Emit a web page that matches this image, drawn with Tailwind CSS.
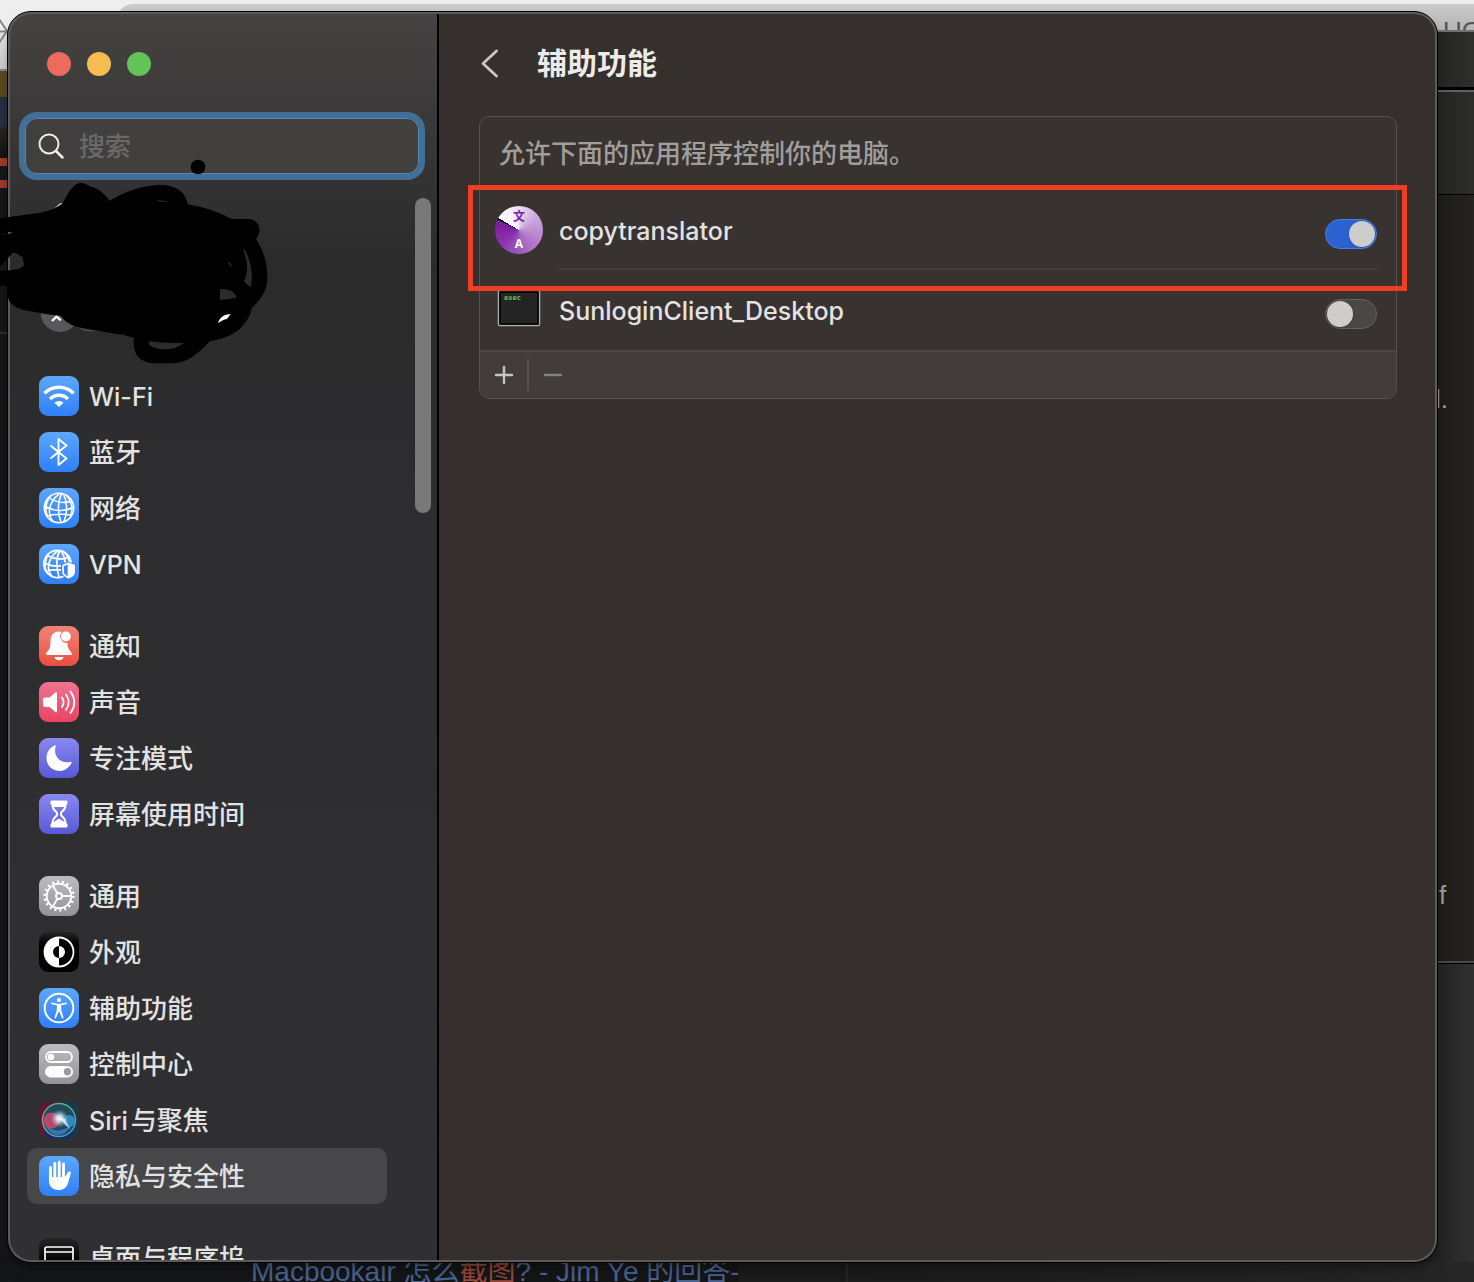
<!DOCTYPE html>
<html lang="zh-CN">
<head>
    <meta charset="UTF-8">
    <meta name="viewport" content="width=device-width, initial-scale=1.0">
    <title>辅助功能</title>
    <script src="https://cdn.jsdelivr.net/npm/@tailwindcss/browser@4"></script>
</head>
<body class="relative h-screen overflow-hidden bg-[#151618] pt-[11px] pr-[36px] pb-[19px] pl-[7px] font-['Inter','Noto_Sans_CJK_SC',sans-serif] text-[#e3e2e2]">

    <!-- Windows behind -->
    <div class="absolute inset-0 flex flex-col overflow-hidden" aria-hidden="true">
        <div class="h-[30px] shrink-0 bg-[#eeeeee] pl-[117px]">
            <div class="mt-1 h-[26px] rounded-tl-2xl bg-linear-to-b from-[#cbcbcb] to-[#b4b4b4] pr-1 pt-[15px] text-right font-['Liberation_Sans',sans-serif] text-[26px] leading-[24px] text-[#555555]"><span class="-mr-3">UG</span></div>
        </div>
        <div class="flex flex-1 justify-between">
            <div class="flex w-[20px] flex-col">
                <div class="h-[39px] bg-linear-to-b from-[#e8e8e8] to-[#cccccc]"></div>
                <div class="h-[28px] border-t-2 border-[#888888] bg-[#5b4a22]"></div>
                <div class="h-[30px] bg-[#263044]"></div>
                <div class="h-[31px] bg-linear-to-b from-[#2b2620] to-[#131313]"></div>
                <div class="h-[30px] border-y-8 border-[#a23a2d] bg-[#16181b]"></div>
                <div class="h-[146px] border-b-2 border-[#2c2d30]"></div>
            </div>
            <div class="flex w-[57px] flex-col">
                <div class="h-[57px] border-t-2 border-[#70706e] bg-linear-to-r from-[#20201f] to-[#2e2e2c]"></div>
                <div class="h-[3px] bg-black"></div>
                <div class="h-[105px] border-t-2 border-b border-t-[#62605f] border-b-black bg-linear-to-r from-[#20201f] to-[#2c2c2a]"></div>
                <div class="flex h-[768px] flex-col justify-between border-b-2 border-[#4a4846] bg-linear-to-r from-[#191816] to-[#252420] pt-[188px] pb-[50px] pl-[18px] font-['Liberation_Sans',sans-serif] text-[26px] leading-[32px] text-[#a09f9d]">
                    <span>l.</span>
                    <span class="pl-1">f</span>
                </div>
                <div class="flex-1 border-t border-black bg-linear-to-r from-[#1c1c1c] to-[#303030]"></div>
            </div>
        </div>
        <div class="flex h-[20px] shrink-0">
            <div class="flex h-[20px] w-[738px] items-end overflow-hidden pl-[251px] font-['Liberation_Sans','Noto_Sans_CJK_SC',sans-serif] text-[28px] leading-[20px] whitespace-nowrap text-[#4c6594]">
                <span>Macbookair 怎么<span class="text-[#9c4a3b]">截图</span>? - Jim Ye 的回答-</span>
            </div>
            <div class="w-[110px] border-r-2 border-[#262626] bg-[#1b1b1b]"></div>
            <div class="flex-1 bg-linear-to-r from-[#1b1b1b] to-[#262626]"></div>
        </div>
    </div>
    <svg class="absolute top-[18px] left-0 h-[28px] w-[8px]" viewBox="0 0 8 28" fill="none" stroke="#858585" stroke-width="2" aria-hidden="true"><path d="M0 13.500h8M-1 1l8 12-8 12"/></svg>

    <!-- Settings window -->
    <div class="relative flex h-full rounded-[24px] border border-black bg-[#5d5a58] p-[2px] shadow-lg shadow-black/30">
        <div class="flex min-w-0 flex-1 overflow-hidden rounded-[21px]">

            <aside class="relative flex w-[429px] shrink-0 flex-col border-r-2 border-black bg-linear-to-b from-[#454342] via-[#2c2b2c] via-20% to-[#303034]">
                <div class="flex shrink-0 gap-4 pt-[38px] pl-[37px]">
                    <button class="size-6 rounded-full bg-[#ed6a5e]" aria-label="关闭"></button>
                    <button class="size-6 rounded-full bg-[#f5bd4f]" aria-label="最小化"></button>
                    <button class="size-6 rounded-full bg-[#61c454]" aria-label="缩放"></button>
                </div>

                <label class="mt-[36px] mr-[12px] ml-[9px] flex h-[68px] shrink-0 items-center gap-[14px] rounded-[18px] border-[6px] border-[#416f98] bg-[#42403f] pl-[12px] inset-ring inset-ring-[#5386b5]">
                    <svg class="size-[28px]" viewBox="0 0 28 28" fill="none" stroke="#eeeeee" stroke-width="2" stroke-linecap="round" aria-hidden="true"><circle cx="12" cy="12" r="9.500"/><path d="M19 19l6.500 6.500" stroke-width="2.500"/></svg>
                    <input type="text" placeholder="搜索" aria-label="搜索" class="min-w-0 flex-1 bg-transparent pt-[2px] text-[26px] leading-[36px] font-medium outline-none placeholder:text-[#6b6968]">
                </label>

                <nav class="flex flex-col gap-[26px] pt-[188px] pr-[50px] pl-[17px] text-[26px] leading-[36px] font-medium">
                    <div class="flex flex-col">
                        <a href="#wifi" class="flex h-14 items-center gap-[10px] rounded-[10px] px-3">
                            <svg class="size-10 rounded-[9px] bg-linear-to-b from-[#5da7fb] to-[#2f7ff8]" viewBox="0 0 40 40" fill="none" stroke="#fff" stroke-width="3.600"><path d="M5.500 17.200c8-8 21-8 29 0M11 23c5-5 13-5 18 0"/><path d="M15.500 26.800q4.500-3.400 9 0L20 31z" fill="#fff" stroke="none"/></svg>
                            <span class="pt-[2px] text-[25px]">Wi-Fi</span>
                        </a>
                        <a href="#bluetooth" class="flex h-14 items-center gap-[10px] rounded-[10px] px-3">
                            <svg class="size-10 rounded-[9px] bg-linear-to-b from-[#5da7fb] to-[#2f7ff8]" viewBox="0 0 40 40" fill="none" stroke="#fff" stroke-width="1.900" stroke-linejoin="round" stroke-linecap="round"><path d="M12 14l15.500 12.500L19.500 33V7l8 6.500L12 26"/></svg>
                            <span class="pt-[2px]">蓝牙</span>
                        </a>
                        <a href="#network" class="flex h-14 items-center gap-[10px] rounded-[10px] px-3">
                            <svg class="size-10 rounded-[9px] bg-linear-to-b from-[#5da7fb] to-[#2f7ff8]" viewBox="0 0 40 40" fill="none" stroke="#fff" stroke-width="1.600"><circle cx="20" cy="20" r="14.700"/><path d="M21 5.300C14 10 11 16 10.500 22S12 31 14 33M23 5.500C19 12 18 24 22 34.500M24.500 6C28 13 29 24 25 33.500M10 9.500c6 5 15 6 23 3.500M5.500 18c8 5.500 20 6 29 1M8 28c7-2 18-2.500 25-.5M10 9.500c-4 7-4 13-1.500 19M27 7c5 5 7 12 5 20"/></svg>
                            <span class="pt-[2px]">网络</span>
                        </a>
                        <a href="#vpn" class="flex h-14 items-center gap-[10px] rounded-[10px] px-3">
                            <svg class="size-10 rounded-[9px] bg-linear-to-b from-[#5da7fb] to-[#2f7ff8]" viewBox="0 0 40 40" fill="none" stroke="#fff" stroke-width="1.700"><circle cx="18.500" cy="20" r="13.700"/><path d="M19 6.500C13 11 10 17 9.500 22S11 30 13 32.500M21 6.500C17 13 17 24 20 33M22 7c4 6 5 11 4.500 17M25 8c4 4 5 7 5.500 11M8 11c6 4 14 5 22 2.500M5 18.500c7 4.500 18 5 27 1M7 27.500c5-2 12-2 17-1.500M9 10c-3 6-4 12-1.500 18"/><path d="M29.500 17.500l7.500 3v7c0 4-3.500 6.500-7.500 8-4-1.500-7.500-4-7.500-8v-7z" fill="#3a87f9" stroke="none"/><path d="M29.500 19.500l5.500 2v6c0 3-2.500 5-5.500 6-3-1-5.500-3-5.500-6v-6z"/><path d="M29.500 19.500l5.500 2v6c0 3-2.500 5-5.500 6z" fill="#fff"/></svg>
                            <span class="pt-[2px] text-[25px]">VPN</span>
                        </a>
                    </div>
                    <div class="flex flex-col">
                        <a href="#notifications" class="flex h-14 items-center gap-[10px] rounded-[10px] px-3">
                            <svg class="size-10 rounded-[9px] bg-linear-to-b from-[#ee8378] to-[#eb4d3d]" viewBox="0 0 40 40" fill="#fff"><path d="M20 5.500c-6 0-8.500 4.500-8.500 9.500 0 7-1.200 8.500-3.500 11-1.500 1.700-1 3 .5 3h23c1.500 0 2-1.300.5-3-2-2.500-3.500-4-3.500-9a6.800 6.800 0 0 1-6-10.900zM15.500 31h9c-1 4.300-8 4.300-9 0z"/><circle cx="26.800" cy="10.500" r="5"/></svg>
                            <span class="pt-[2px]">通知</span>
                        </a>
                        <a href="#sound" class="flex h-14 items-center gap-[10px] rounded-[10px] px-3">
                            <svg class="size-10 rounded-[9px] bg-linear-to-b from-[#ee7390] to-[#ea4262]" viewBox="0 0 40 40" fill="none" stroke="#fff" stroke-width="1.700" stroke-linecap="round"><path d="M18 11v18.500c0 1-1 1.200-1.700.6L10.500 25H6c-1.200 0-2-.8-2-2v-5.500c0-1.200.8-2 2-2h4.500l5.800-5c.7-.6 1.700-.4 1.700.5z" fill="#fff" stroke="none"/><path d="M23 15.500c2 3 2 6.500 0 9.500M27 12.500c3.500 5 3.500 10.500 0 15.500M31.500 9.500c5 7 5 14.500 0 21.500"/></svg>
                            <span class="pt-[2px]">声音</span>
                        </a>
                        <a href="#focus" class="flex h-14 items-center gap-[10px] rounded-[10px] px-3">
                            <svg class="size-10 rounded-[9px] bg-linear-to-b from-[#8a88f0] to-[#5a58d8]" viewBox="0 0 40 40" fill="#fff"><path d="M15.600 7.500c.8-.4 1.400.1 1.100 1-3 9.500 4.800 18 14.600 15.300 1-.3 1.600.3 1.200 1.200C29.500 30.500 25 33 20.500 33 13.500 33 7.500 27.500 7.500 20c0-5.500 3-10.500 8.100-12.500z"/></svg>
                            <span class="pt-[2px]">专注模式</span>
                        </a>
                        <a href="#screentime" class="flex h-14 items-center gap-[10px] rounded-[10px] px-3">
                            <svg class="size-10 rounded-[9px] bg-linear-to-b from-[#8a88f0] to-[#5a58d8]" viewBox="0 0 40 40" fill="#fff"><path fill-rule="evenodd" d="M12.500 6.500h15c1.500 0 1.500 3 0 4.500 0 4-2 6-4 7.700-.8.700-.8 1.900 0 2.600 2 1.700 4 4.200 4 7.700 1.500 1.500 1.500 4.500 0 4.500h-15c-1.500 0-1.500-3 0-4.500 0-3.500 2-6 4-7.700.8-.7.800-1.900 0-2.600-2-1.700-4-3.700-4-7.700-1.500-1.500-1.500-4.500 0-4.500zM15 13c.7 2 2 3.300 3.300 4.400 1 .9 1 4.200 0 5.200-1.800 1.600-3.300 3-3.800 5.400l5.500-3.500 5.500 3.500c-.5-2.400-2-3.800-3.800-5.400-1-1-1-4.300 0-5.200C23 16.300 24.300 15 25 13z"/></svg>
                            <span class="pt-[2px]">屏幕使用时间</span>
                        </a>
                    </div>
                    <div class="flex flex-col">
                        <a href="#general" class="flex h-14 items-center gap-[10px] rounded-[10px] px-3">
                            <svg class="size-10 rounded-[9px] bg-linear-to-b from-[#bdbcc1] to-[#939297]" viewBox="0 0 40 40" fill="none" stroke="#fff" stroke-width="1.900"><circle cx="20" cy="20" r="12.300"/><circle cx="20" cy="20" r="14.300" stroke-width="2.600" stroke-dasharray="2 2.992"/><circle cx="20" cy="20" r="3"/><path d="M23 20h9M18.500 17.400l-4.700-8M18.500 22.600l-4.700 8"/></svg>
                            <span class="pt-[2px]">通用</span>
                        </a>
                        <a href="#appearance" class="flex h-14 items-center gap-[10px] rounded-[10px] px-3">
                            <svg class="size-10 rounded-[9px] bg-linear-to-b from-[#262626] via-black to-black" viewBox="0 0 40 40"><circle cx="20" cy="20" r="14.500" fill="none" stroke="#fff" stroke-width="1.800"/><path d="M20 5.500a14.500 14.500 0 0 0 0 29V26a6 6 0 0 1 0-12z" fill="#fff"/><path d="M20 14a6 6 0 0 1 0 12z" fill="#fff"/></svg>
                            <span class="pt-[2px]">外观</span>
                        </a>
                        <a href="#accessibility" class="flex h-14 items-center gap-[10px] rounded-[10px] px-3">
                            <svg class="size-10 rounded-[9px] bg-linear-to-b from-[#5da7fb] to-[#2f7ff8]" viewBox="0 0 40 40" fill="none" stroke="#fff" stroke-width="2"><circle cx="20" cy="20" r="14.300"/><circle cx="20" cy="12" r="2.100" fill="#fff" stroke="none"/><path d="M13 15.300l5 1.200h4l5-1.200" stroke-width="1.700" stroke-linecap="round" stroke-linejoin="round"/><path d="M18 16h4l.3 6.500 2.200 7c.3 1-1.200 1.300-1.500.4L20.500 24h-1L17 29.900c-.3.900-1.800.6-1.500-.4l2.200-7z" fill="#fff" stroke="none"/></svg>
                            <span class="pt-[2px]">辅助功能</span>
                        </a>
                        <a href="#controlcenter" class="flex h-14 items-center gap-[10px] rounded-[10px] px-3">
                            <svg class="size-10 rounded-[9px] bg-linear-to-b from-[#bdbcc1] to-[#939297]" viewBox="0 0 40 40"><rect x="7" y="8" width="26" height="10" rx="5" fill="none" stroke="#fff" stroke-width="1.800"/><circle cx="12" cy="13" r="3.300" fill="#fff"/><rect x="6" y="22" width="28" height="11.500" rx="5.750" fill="#fff"/><circle cx="28.500" cy="27.700" r="3.700" fill="#9b9a9f"/></svg>
                            <span class="pt-[2px]">控制中心</span>
                        </a>
                        <a href="#siri" class="flex h-14 items-center gap-[10px] rounded-[10px] px-3">
                            <svg class="size-10" viewBox="0 0 40 40">
                                <defs>
                                    <linearGradient id="siriBg" x1="0" y1="0" x2="1" y2="0"><stop offset="0" stop-color="#6e1230"/><stop offset=".5" stop-color="#20303c"/><stop offset="1" stop-color="#153d4b"/></linearGradient>
                                    <radialGradient id="siriGlow"><stop offset="0" stop-color="#fff"/><stop offset=".35" stop-color="#dceef4" stop-opacity=".85"/><stop offset="1" stop-color="#7fb5cc" stop-opacity="0"/></radialGradient>
                                    <linearGradient id="siriRing" x1="0" y1="0" x2="1" y2="1"><stop offset="0" stop-color="#b07a7c"/><stop offset=".4" stop-color="#58b494"/><stop offset="1" stop-color="#3f8fd8"/></linearGradient>
                                </defs>
                                <rect x="1" y="1" width="38" height="38" rx="9" fill="url(#siriBg)"/>
                                <path d="M4 32q16-6 32 0-4 7-10 7H12q-6 0-8-7z" fill="#172c6c" opacity=".8"/>
                                <circle cx="20" cy="20" r="16.500" fill="#1e4d5a" stroke="url(#siriRing)" stroke-width="1.500"/>
                                <path d="M6 24c7 8 20 10 28-3-5 16-21 20-28 3z" fill="#3b73b8"/>
                                <circle cx="12.500" cy="20.500" r="8" fill="#e0466f" opacity=".8"/>
                                <circle cx="30" cy="21" r="6" fill="#3597dc" opacity=".8"/>
                                <circle cx="20.500" cy="18.500" r="9" fill="url(#siriGlow)"/>
                                <path d="M20 18l11 11-5-10z" fill="#fff" opacity=".7"/>
                            </svg>
                            <span class="flex items-center gap-[3px] pt-[2px]"><span class="text-[25px]">Siri</span>与聚焦</span>
                        </a>
                        <a href="#privacy" aria-current="page" class="flex h-14 items-center gap-[10px] rounded-[10px] bg-[#474648] px-3">
                            <svg class="size-10 rounded-[9px] bg-linear-to-b from-[#5da7fb] to-[#2f7ff8]" viewBox="0 0 40 40" fill="none" stroke="#fff" stroke-width="2.900" stroke-linecap="round"><path d="M11.500 11.500V24M15.800 7.500V22M20.200 6.200V22M24.500 8V22"/><path d="M10 21h16l2.600-4.500c1-1.700 3.800-1.200 3.200.8L29 27c-1.200 4.500-4.500 7-9.300 7C13.500 34 10 30 10 25z" fill="#fff" stroke="none"/></svg>
                            <span class="pt-[2px]">隐私与安全性</span>
                        </a>
                    </div>
                    <div class="flex flex-col">
                        <a href="#desktop" class="flex h-14 items-center gap-[10px] rounded-[10px] px-3">
                            <svg class="size-10 rounded-[9px] bg-linear-to-b from-[#262626] to-black" viewBox="0 0 40 40" fill="none" stroke="#fff" stroke-width="1.700"><rect x="6" y="9" width="28" height="24" rx="2"/><path d="M6 14h28M12 24h16"/></svg>
                            <span class="pt-[2px]">桌面与程序坞</span>
                        </a>
                    </div>
                </nav>

                <div class="absolute top-[184px] right-[6px] h-[315px] w-4 rounded-full bg-[#797879]"></div>
            </aside>

            <main class="min-w-0 flex-1 bg-[#35302d] pr-[38px] pl-[40px]">
                <header class="flex h-[102px] items-center gap-[38px] pb-1">
                    <button aria-label="返回"><svg class="h-[30px] w-[20px]" viewBox="0 0 20 30" fill="none" stroke="#c9c7c6" stroke-width="2.800" stroke-linecap="round" stroke-linejoin="round"><path d="M17.500 3L4 15.500 17.500 28"/></svg></button>
                    <h1 class="text-[30px] leading-[40px] font-bold text-[#ecebea]">辅助功能</h1>
                </header>

                <section class="relative rounded-[10px] border border-[#555150] bg-[#383330]">
                    <p class="h-[73px] pt-[19px] pl-[19px] text-[26px] leading-[36px] font-medium text-[#a19e9c]">允许下面的应用程序控制你的电脑。</p>

                    <div class="flex h-20 items-center pr-[19px] pl-[15px]">
                        <svg class="size-12 shrink-0 rounded-full bg-conic-[from_300deg,#ffffff,#f6edfa_40deg,#c9a2da_120deg,#ab6fc5_210deg,#8c34ae_290deg,#7b1a9f_355deg,#000000_356deg]" viewBox="0 0 48 48" aria-hidden="true"><text x="24" y="15" text-anchor="middle" font-size="12" font-weight="700" font-family="Noto Sans CJK SC" fill="#7a229f">文</text><text x="24" y="42" text-anchor="middle" font-size="12" font-weight="700" font-family="Noto Sans" fill="#fff">A</text></svg>
                        <div class="ml-4 flex h-full flex-1 items-center justify-between border-b-2 border-[#403d3c] pt-[2px]">
                            <label for="copytranslator" class="pt-[2px] text-[25px] leading-[36px] font-medium">copytranslator</label>
                            <input id="copytranslator" type="checkbox" checked class="relative mt-2 h-[30px] w-[52px] appearance-none rounded-full border border-[#63605e] bg-[#4a4846] before:absolute before:top-px before:left-px before:size-[26px] before:rounded-full before:bg-[#cfcdcb] before:shadow-sm checked:border-[#4a7fe0] checked:bg-[#2a62d0] checked:before:left-[23px]">
                        </div>
                    </div>
                    <div class="flex h-20 items-center pr-[19px] pl-[15px]">
                        <svg class="size-12 shrink-0" viewBox="0 0 48 48" aria-hidden="true"><rect x="3.500" y="4.500" width="41" height="35" rx="1.500" fill="#262626" stroke="#a9b0b2" stroke-width="1.500"/><rect x="5" y="6" width="38" height="32" fill="#242424" stroke="#000" stroke-width="1.500"/><text x="9" y="14" font-size="7" font-weight="700" font-family="DejaVu Sans Mono" fill="#62c95b">exec</text></svg>
                        <div class="ml-4 flex h-full flex-1 items-center justify-between">
                            <label for="sunlogin" class="pt-[2px] text-[25px] leading-[36px] font-medium">SunloginClient_Desktop</label>
                            <input id="sunlogin" type="checkbox" class="relative mt-2 h-[30px] w-[52px] appearance-none rounded-full border border-[#63605e] bg-[#4a4846] before:absolute before:top-px before:left-px before:size-[26px] before:rounded-full before:bg-[#cfcdcb] before:shadow-sm">
                        </div>
                    </div>

                    <div class="flex h-12 items-center rounded-b-[9px] border-t-2 border-[#4b4746] bg-[#423d3c]">
                        <button aria-label="添加" class="flex h-8 w-[49px] items-center justify-center border-r-2 border-[#575352]"><svg class="size-5" viewBox="0 0 20 20" stroke="#c6c4c3" stroke-width="2.400" stroke-linecap="round"><path d="M2 10h16M10 2v16"/></svg></button>
                        <button aria-label="移除" class="flex h-8 w-12 items-center justify-center"><svg class="size-5" viewBox="0 0 20 20" stroke="#838080" stroke-width="2.400" stroke-linecap="round"><path d="M2 10h16"/></svg></button>
                    </div>

                    <!-- Highlight frame -->
                    <div class="pointer-events-none absolute top-[68px] -right-[11px] -left-[12px] h-[106px] border-[5px] border-[#ee3f24]"></div>
                </section>
            </main>
        </div>
    </div>

    <!-- Scribble over the account row -->
    <svg class="pointer-events-none absolute top-[170px] left-0 h-[210px] w-[300px] overflow-visible" viewBox="0 0 900 630" aria-hidden="true">
        <circle cx="270" cy="428" r="57" fill="#494849"/>
        <circle cx="180" cy="428" r="58" fill="#58575a"/>
        <path d="M156 453l14-14 12 12" fill="none" stroke="#fff" stroke-width="7"/>
        <path d="M160 118l20-18h10v20z" fill="#c5c5d2"/>
        <path fill-rule="evenodd" d="M0 145L120 128Q165 120 188 100C205 65 222 38 245 38Q258 40 270 49C297 57 312 70 328 92Q410 45 480 45C525 45 559 65 563 103Q640 116 695 147H745C775 147 790 182 768 208C790 240 802 280 802 320C802 365 780 390 755 415Q748 450 720 476C695 498 660 508 630 513C600 547 560 580 520 580H460C405 575 398 535 402 503Q370 493 330 489C290 480 250 478 215 465Q190 452 183 438Q140 434 105 426C50 418 28 405 24 380L21 347H0zM0 290L38 249Q45 246 68 262L72 285C65 299 38 300 20 301L0 303zM0 191L20 190Q25 183 40 187Q38 193 0 193zM468 91Q490 90 506 96Q480 97 468 91zM730 242Q728 236 734 239C755 275 760 320 752 350Q743 347 732 333C746 310 743 270 730 242zM660 357C690 355 705 368 711 382Q690 389 660 389zM684 274Q694 278 695 292Q688 288 684 274zM448 514Q500 521 552 518C530 537 505 539 480 537Q440 530 448 514z"/>
        <path d="M655 455q8-17 22-21l15-2-11 15q-8 0-26 12z" fill="#fff"/>
        <circle cx="594" cy="-9" r="22"/>
    </svg>
</body>
</html>
